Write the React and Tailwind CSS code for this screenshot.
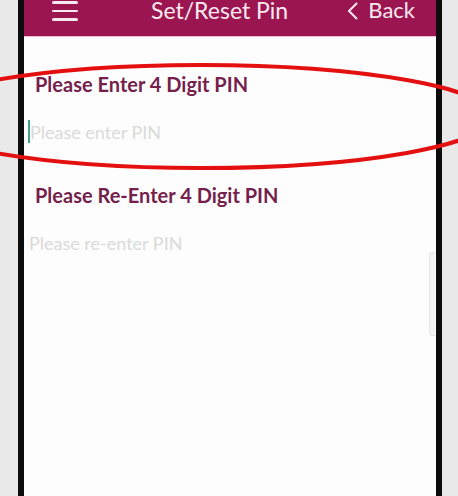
import React from "react";

const font = { fontFamily: "Lato, 'Open Sans', sans-serif" };

export default function App() {
  return (
    <div className="relative w-[458px] h-[496px] overflow-hidden bg-[#e9e9e9] pl-[18px]" style={font}>
      <div className="w-[424px] h-full bg-[#0c0c0c] px-[6px]">
        <div className="relative w-[412px] h-full bg-[#fdfdfd] flex flex-col">
          {/* header */}
          <div className="h-[36px] bg-[#9b1651] flex items-start text-white shrink-0">
            <div className="ml-[28px] mt-[1px] w-[26px] flex flex-col gap-[6px]">
              <span className="block h-[2.5px] bg-white/90 rounded" />
              <span className="block h-[2.5px] bg-white/90 rounded" />
              <span className="block h-[2.5px] bg-white/90 rounded" />
            </div>
            <div className="ml-[73px] -mt-[3px] text-[23px] leading-[26px] text-[#fbe9f0]">Set/Reset Pin</div>
            <div className="ml-auto mr-[21px] -mt-[3px] flex items-center text-[22px] leading-[26px] text-[#fbe9f0]">
              <svg width="14" height="20" viewBox="0 0 14 20" className="mr-[8px] mt-[1px]">
                <path d="M11 2 L3 10 L11 18" fill="none" stroke="#fbe9f0" strokeWidth="2" />
              </svg>
              Back
            </div>
          </div>
          <div className="h-[1px] bg-[#f2bfd2] shrink-0" />

          {/* form */}
          <div className="flex flex-col">
            <div className="mt-[35px] pl-[11px] text-[20px] leading-[24px] font-bold text-[#751f4c]">
              Please Enter 4 Digit PIN
            </div>
            <div className="mt-[24px] flex items-center h-[23px]">
              <span className="ml-[4px] w-[2px] h-[23px] bg-[#3aa58a]" />
              <span className="text-[18px] leading-[22px] text-[#dadada]">Please enter PIN</span>
            </div>
            <div className="mt-[40px] pl-[11px] text-[20px] leading-[24px] font-bold text-[#751f4c]">
              Please Re-Enter 4 Digit PIN
            </div>
            <div className="mt-[25px] pl-[5px] text-[18px] leading-[22px] text-[#dadada]">
              Please re-enter PIN
            </div>
          </div>

          <div className="absolute right-[1px] top-[252px] w-[6px] h-[84px] rounded-l-[4px] border border-r-0 border-[#e4e4e4] bg-[#f4f4f4]" />
        </div>
      </div>

      {/* red annotation */}
      <svg className="absolute inset-0 pointer-events-none" width="458" height="496" viewBox="0 0 458 496">
        <ellipse cx="201" cy="116.5" rx="291" ry="51.5" fill="none" stroke="#e3100f" strokeWidth="4" />
      </svg>
    </div>
  );
}
